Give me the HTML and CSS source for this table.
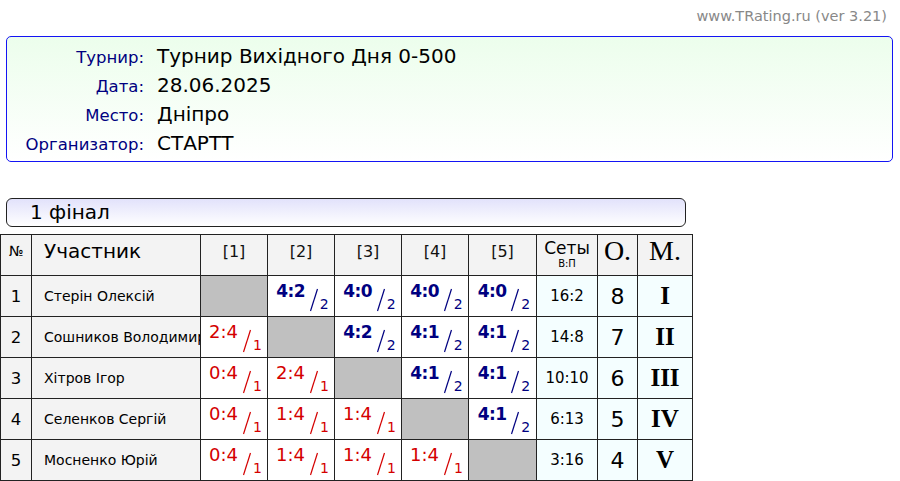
FILE: index.html
```html
<!DOCTYPE html>
<html>
<head>
<meta charset="utf-8">
<link rel="stylesheet" href="styles.css">
</head>
<body>
<div class="page">
  <div class="site">www.TRating.ru (ver 3.21)</div>
  <div class="info">
    <div class="irow"><span class="lbl">Турнир:</span><span class="val">Турнир Вихідного Дня 0-500</span></div>
    <div class="irow"><span class="lbl">Дата:</span><span class="val">28.06.2025</span></div>
    <div class="irow"><span class="lbl">Место:</span><span class="val">Дніпро</span></div>
    <div class="irow"><span class="lbl">Организатор:</span><span class="val">СТАРТТ</span></div>
  </div>
  <div class="stage">1 фінал</div>
  <table class="grid">
    <colgroup>
      <col class="c-no"><col class="c-name"><col class="c-s"><col class="c-s"><col class="c-s"><col class="c-s"><col class="c-s5"><col class="c-sets"><col class="c-pts"><col class="c-pl">
    </colgroup>
    <thead>
      <tr>
        <th class="h-no">№</th>
        <th class="h-name">Участник</th>
        <th class="h-op">[1]</th>
        <th class="h-op">[2]</th>
        <th class="h-op">[3]</th>
        <th class="h-op">[4]</th>
        <th class="h-op">[5]</th>
        <th class="h-sets"><span class="st">Сеты</span><span class="vp">В:П</span></th>
        <th class="h-big">О.</th>
        <th class="h-big">М.</th>
      </tr>
    </thead>
    <tbody>
      <tr>
        <td class="no">1</td><td class="name">Стерін Олексій</td>
        <td class="self"></td>
        <td class="sc win"><div class="r"><b>4:2</b><svg class="sl" viewBox="0 0 10 24"><line x1="1.5" y1="23" x2="8.5" y2="1"/></svg><sub>2</sub></div></td>
        <td class="sc win"><div class="r"><b>4:0</b><svg class="sl" viewBox="0 0 10 24"><line x1="1.5" y1="23" x2="8.5" y2="1"/></svg><sub>2</sub></div></td>
        <td class="sc win"><div class="r"><b>4:0</b><svg class="sl" viewBox="0 0 10 24"><line x1="1.5" y1="23" x2="8.5" y2="1"/></svg><sub>2</sub></div></td>
        <td class="sc win"><div class="r"><b>4:0</b><svg class="sl" viewBox="0 0 10 24"><line x1="1.5" y1="23" x2="8.5" y2="1"/></svg><sub>2</sub></div></td>
        <td class="sets">16:2</td><td class="pts">8</td><td class="pl">I</td>
      </tr>
      <tr>
        <td class="no">2</td><td class="name">Сошников Володимир</td>
        <td class="sc loss"><div class="r"><b>2:4</b><svg class="sl" viewBox="0 0 10 24"><line x1="1.5" y1="23" x2="8.5" y2="1"/></svg><sub>1</sub></div></td>
        <td class="self"></td>
        <td class="sc win"><div class="r"><b>4:2</b><svg class="sl" viewBox="0 0 10 24"><line x1="1.5" y1="23" x2="8.5" y2="1"/></svg><sub>2</sub></div></td>
        <td class="sc win"><div class="r"><b>4:1</b><svg class="sl" viewBox="0 0 10 24"><line x1="1.5" y1="23" x2="8.5" y2="1"/></svg><sub>2</sub></div></td>
        <td class="sc win"><div class="r"><b>4:1</b><svg class="sl" viewBox="0 0 10 24"><line x1="1.5" y1="23" x2="8.5" y2="1"/></svg><sub>2</sub></div></td>
        <td class="sets">14:8</td><td class="pts">7</td><td class="pl">II</td>
      </tr>
      <tr>
        <td class="no">3</td><td class="name">Хітров Ігор</td>
        <td class="sc loss"><div class="r"><b>0:4</b><svg class="sl" viewBox="0 0 10 24"><line x1="1.5" y1="23" x2="8.5" y2="1"/></svg><sub>1</sub></div></td>
        <td class="sc loss"><div class="r"><b>2:4</b><svg class="sl" viewBox="0 0 10 24"><line x1="1.5" y1="23" x2="8.5" y2="1"/></svg><sub>1</sub></div></td>
        <td class="self"></td>
        <td class="sc win"><div class="r"><b>4:1</b><svg class="sl" viewBox="0 0 10 24"><line x1="1.5" y1="23" x2="8.5" y2="1"/></svg><sub>2</sub></div></td>
        <td class="sc win"><div class="r"><b>4:1</b><svg class="sl" viewBox="0 0 10 24"><line x1="1.5" y1="23" x2="8.5" y2="1"/></svg><sub>2</sub></div></td>
        <td class="sets">10:10</td><td class="pts">6</td><td class="pl">III</td>
      </tr>
      <tr>
        <td class="no">4</td><td class="name">Селенков Сергій</td>
        <td class="sc loss"><div class="r"><b>0:4</b><svg class="sl" viewBox="0 0 10 24"><line x1="1.5" y1="23" x2="8.5" y2="1"/></svg><sub>1</sub></div></td>
        <td class="sc loss"><div class="r"><b>1:4</b><svg class="sl" viewBox="0 0 10 24"><line x1="1.5" y1="23" x2="8.5" y2="1"/></svg><sub>1</sub></div></td>
        <td class="sc loss"><div class="r"><b>1:4</b><svg class="sl" viewBox="0 0 10 24"><line x1="1.5" y1="23" x2="8.5" y2="1"/></svg><sub>1</sub></div></td>
        <td class="self"></td>
        <td class="sc win"><div class="r"><b>4:1</b><svg class="sl" viewBox="0 0 10 24"><line x1="1.5" y1="23" x2="8.5" y2="1"/></svg><sub>2</sub></div></td>
        <td class="sets">6:13</td><td class="pts">5</td><td class="pl">IV</td>
      </tr>
      <tr>
        <td class="no">5</td><td class="name">Мосненко Юрій</td>
        <td class="sc loss"><div class="r"><b>0:4</b><svg class="sl" viewBox="0 0 10 24"><line x1="1.5" y1="23" x2="8.5" y2="1"/></svg><sub>1</sub></div></td>
        <td class="sc loss"><div class="r"><b>1:4</b><svg class="sl" viewBox="0 0 10 24"><line x1="1.5" y1="23" x2="8.5" y2="1"/></svg><sub>1</sub></div></td>
        <td class="sc loss"><div class="r"><b>1:4</b><svg class="sl" viewBox="0 0 10 24"><line x1="1.5" y1="23" x2="8.5" y2="1"/></svg><sub>1</sub></div></td>
        <td class="sc loss"><div class="r"><b>1:4</b><svg class="sl" viewBox="0 0 10 24"><line x1="1.5" y1="23" x2="8.5" y2="1"/></svg><sub>1</sub></div></td>
        <td class="self"></td>
        <td class="sets">3:16</td><td class="pts">4</td><td class="pl">V</td>
      </tr>
    </tbody>
  </table>
</div>
</body>
</html>
```

FILE: styles.css
```css
html, body {
  margin: 0;
  padding: 0;
  background: #fff;
}
body {
  font-family: "DejaVu Sans", Verdana, sans-serif;
  color: #000;
  overflow: hidden;
}
.page {
  width: 900px;
  height: 481px;
}
.site {
  text-align: right;
  color: #888;
  font-size: 14.5px;
  line-height: 16px;
  padding: 8px 13px 0 0;
  height: 28px;
}
.info {
  margin: 0 7px 0 6px;
  border: 1px solid #1414f4;
  border-radius: 5px;
  background: linear-gradient(#ecfeec, #fff);
  padding-top: 7px;
  box-sizing: border-box;
  height: 126px;
}
.irow {
  display: flex;
  align-items: baseline;
  height: 29px;
}
.lbl {
  width: 137px;
  text-align: right;
  color: #000080;
  font-size: 16.5px;
}
.val {
  margin-left: 13px;
  font-size: 20px;
}
.stage {
  margin: 36px 0 0 6px;
  width: 680px;
  height: 29px;
  box-sizing: border-box;
  border: 1px solid #222;
  border-radius: 6px;
  background: linear-gradient(#e2e2fb, #fff);
  font-size: 20px;
  line-height: 27px;
  padding-left: 23px;
}
.grid {
  margin-top: 7px;
  border-collapse: collapse;
  table-layout: fixed;
  width: 693px;
}
.c-no { width: 31px; }
.c-name { width: 169px; }
.c-s { width: 67px; }
.c-s5 { width: 68px; }
.c-sets { width: 61px; }
.c-pts { width: 40px; }
.c-pl { width: 55px; }
.grid th, .grid td {
  border: 1px solid #222;
  padding: 0;
  height: 40px;
  text-align: center;
  font-weight: normal;
  white-space: nowrap;
  overflow: hidden;
}
.grid th {
  background: #f3f3f3;
  height: 32px;
  padding-bottom: 8px;
}
.grid .h-no { font-size: 14px; }
.grid .h-name {
  text-align: left;
  font-size: 20px;
  padding-left: 12px;
}
.grid .h-op { font-size: 16px; color: #111; }
.grid .h-sets {
  height: 38px;
  padding-bottom: 2px;
}
.st {
  display: block;
  font-size: 17px;
  line-height: 19px;
}
.vp {
  display: block;
  font-size: 10px;
  line-height: 11px;
}
.grid .h-big {
  font-family: "Liberation Serif", "Times New Roman", serif;
  font-size: 28px;
}
.grid .no {
  background: #f3f3f3;
  font-size: 16.5px;
}
.grid .name {
  background: #f3f3f3;
  text-align: left;
  padding-left: 12px;
  font-size: 14px;
}
.self { background: #c0c0c0; }
.sc { background: #fff; }
.r {
  display: flex;
  justify-content: center;
  align-items: flex-start;
  height: 40px;
  padding-left: 3px;
}
.r b {
  font-size: 17px;
  line-height: 17px;
  margin-top: 7px;
}
.win .r b {
  font-weight: bold;
  letter-spacing: -0.6px;
}
.loss .r b {
  font-weight: normal;
  font-size: 18px;
  line-height: 18px;
  margin-top: 6px;
}
.sl {
  width: 10px;
  height: 24px;
  margin: 12px 0 0 4px;
  stroke: currentColor;
  stroke-width: 1.2;
  fill: none;
}
.r sub {
  font-size: 14px;
  line-height: 15px;
  vertical-align: baseline;
  margin: 21px 0 0 1px;
}
.win { color: #000080; }
.loss { color: #d40000; }
.grid .sets, .grid .pts, .grid .pl { background: #f4feff; }
.grid .sets { font-size: 15px; }
.grid .pts { font-size: 22px; }
.grid .pl {
  font-family: "Liberation Serif", "Times New Roman", serif;
  font-weight: bold;
  font-size: 25px;
}
```
